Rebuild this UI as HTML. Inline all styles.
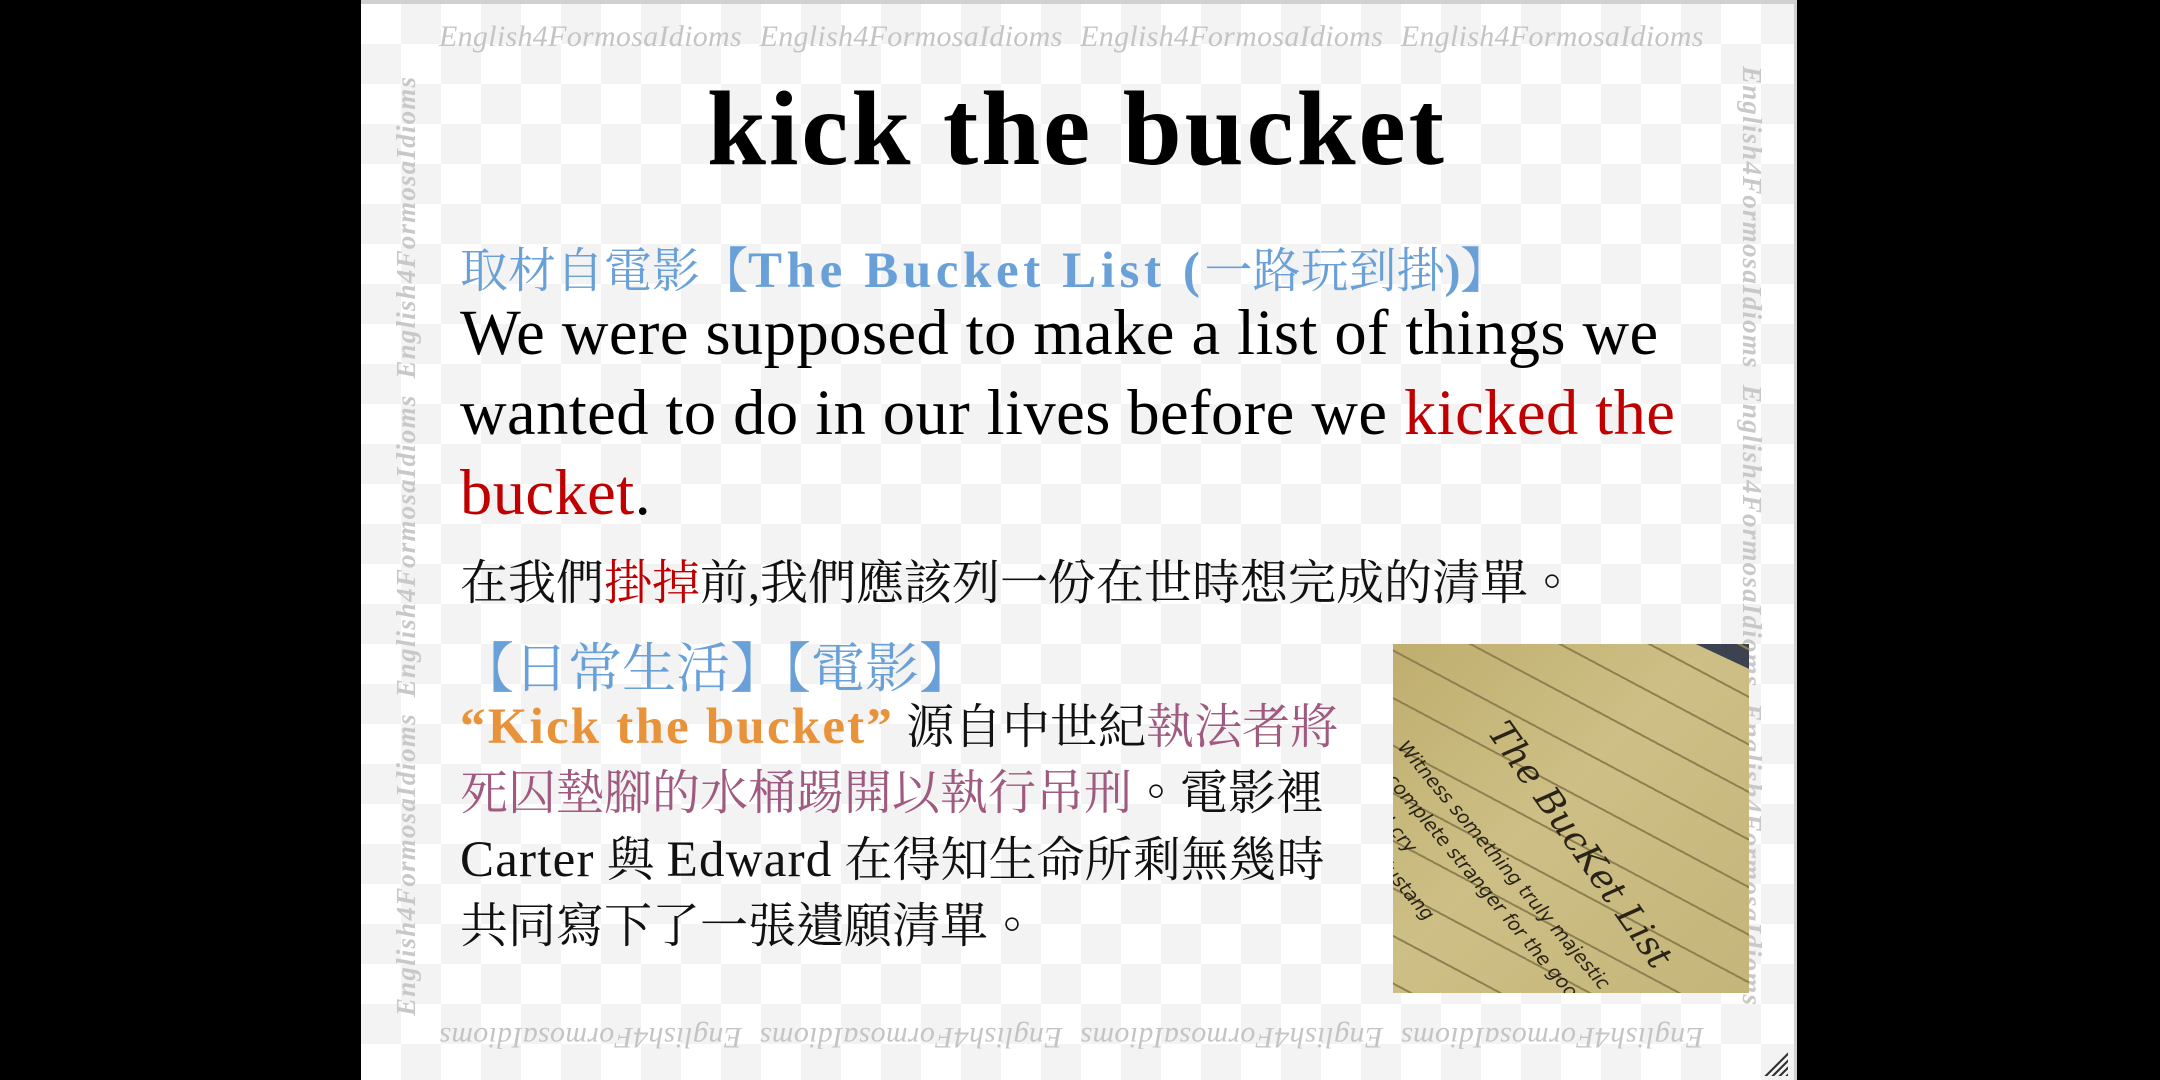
<!DOCTYPE html>
<html><head><meta charset="utf-8"><style>
html,body{margin:0;padding:0;background:#000;width:2160px;height:1080px;overflow:hidden}
#s{position:absolute;left:361px;top:0;width:1436px;height:1080px;overflow:hidden;
background-color:#fff;
background-image:linear-gradient(45deg,#f3f3f3 25%,transparent 25%,transparent 75%,#f3f3f3 75%),linear-gradient(45deg,#f3f3f3 25%,transparent 25%,transparent 75%,#f3f3f3 75%);
background-size:80px 80px;background-position:0 0,40px 40px;
border-top:4px solid #d0d0d0;border-right:3px solid #d0d0d0;box-sizing:border-box}
.wm{position:absolute;font-family:"Liberation Serif",serif;font-style:italic;color:#c4c4c4;font-size:30px;white-space:nowrap;letter-spacing:0.3px}
.vw{position:absolute;width:950px;height:40px;overflow:hidden;font-family:"Liberation Serif",serif;font-style:italic;font-weight:bold;color:#c8c8c8;font-size:27px;white-space:nowrap;letter-spacing:1.2px;transform-origin:0 0}
.t{position:absolute;white-space:nowrap;font-family:"Liberation Serif","Noto Serif CJK SC",serif}
.b{color:#6aa0d8}
.r{color:#c00000}
.m{color:#a05a80}
.o{color:#e8923a;font-weight:bold}
.zh{font-family:"Liberation Serif","Noto Serif CJK TC","Noto Serif CJK SC",serif}
</style></head><body>
<div id="s">
<div class="wm" style="left:78px;top:16px;word-spacing:1px">English4FormosaIdioms &nbsp;English4FormosaIdioms &nbsp;English4FormosaIdioms &nbsp;English4FormosaIdioms</div>
<div class="wm" style="left:78px;top:1016px;transform:rotate(180deg);word-spacing:1px">English4FormosaIdioms &nbsp;English4FormosaIdioms &nbsp;English4FormosaIdioms &nbsp;English4FormosaIdioms</div>
<div class="vw" style="left:30px;top:1012px;transform:rotate(-90deg);width:960px">English4FormosaIdioms &nbsp;English4FormosaIdioms &nbsp;English4FormosaIdioms</div>
<div class="vw" style="left:1406px;top:62px;transform:rotate(90deg)">English4FormosaIdioms &nbsp;English4FormosaIdioms &nbsp;English4FormosaIdioms</div>

<div class="t" style="left:346px;top:64px;font-size:106px;font-weight:bold;color:#000;letter-spacing:3px">kick the bucket</div>

<div class="t b" style="left:99px;top:228px;font-size:48px;font-weight:bold"><span class="zh" style="font-weight:normal">取材自電影</span>【<span style="letter-spacing:4.6px;font-size:51px">The Bucket List (</span><span class="zh" style="font-weight:normal">一路玩到掛</span>)】</div>

<div class="t" style="left:99px;top:289px;font-size:64.5px;color:#000;line-height:80px;letter-spacing:0.45px">We were supposed to make a list of things we<br>wanted to do in our lives before we <span class="r">kicked the</span><br><span class="r">bucket</span>.</div>

<div class="t zh" style="left:99px;top:540px;font-size:48px;color:#111">在我們<span class="r">掛掉</span>前,我們應該列一份在世時想完成的清單。</div>

<div class="t zh b" style="left:99px;top:622px;font-size:54px">【日常生活】【電影】</div>

<div class="t zh" style="left:99px;top:690px;font-size:48px;line-height:66px;color:#111"><span class="o" style="font-family:'Liberation Serif',serif;font-size:51px;letter-spacing:2.2px">“Kick the bucket”</span> 源自中世紀<span class="m">執法者將</span><br><span class="m">死囚墊腳的水桶踢開以執行吊刑</span>。電影裡<br><span style="font-family:'Liberation Serif',serif;font-size:51px;letter-spacing:1.2px">Carter</span> 與 <span style="font-family:'Liberation Serif',serif;font-size:51px;letter-spacing:1.2px">Edward</span> 在得知生命所剩無幾時<br>共同寫下了一張遺願清單。</div>

<div style="position:absolute;left:1032px;top:640px;width:356px;height:349px;overflow:hidden;background:linear-gradient(135deg,#bfae6e 0%,#cdbf85 45%,#c4b57a 100%)">
<div style="position:absolute;left:300px;top:-20px;width:100px;height:40px;background:#3c4250;transform:rotate(25deg)"></div>
<div style="position:absolute;left:-100px;top:-100px;width:600px;height:600px;transform:rotate(28deg);background:repeating-linear-gradient(0deg,transparent 0 40px,#8e8050 40px 42px)"></div>
<div style="position:absolute;left:120px;top:70px;transform:rotate(55deg);transform-origin:0 0;font-family:'DejaVu Serif',serif;font-style:italic;font-size:36px;color:#2a2418;white-space:nowrap">The BucKet List</div>
<div style="position:absolute;left:20px;top:90px;transform:rotate(50deg);transform-origin:0 0;font-family:'DejaVu Sans',sans-serif;font-style:italic;font-size:19px;color:#2a2418;line-height:30px;white-space:nowrap">Witness something truly majestic<br>a complete stranger for the good<br>until I cry<br>Shelby Mustang</div>
</div>

<div style="position:absolute;right:6px;bottom:4px;width:26px;height:26px;background:repeating-linear-gradient(135deg,#333 0 2px,transparent 2px 5px);clip-path:polygon(100% 0,100% 100%,0 100%)"></div>
</div>
</body></html>
